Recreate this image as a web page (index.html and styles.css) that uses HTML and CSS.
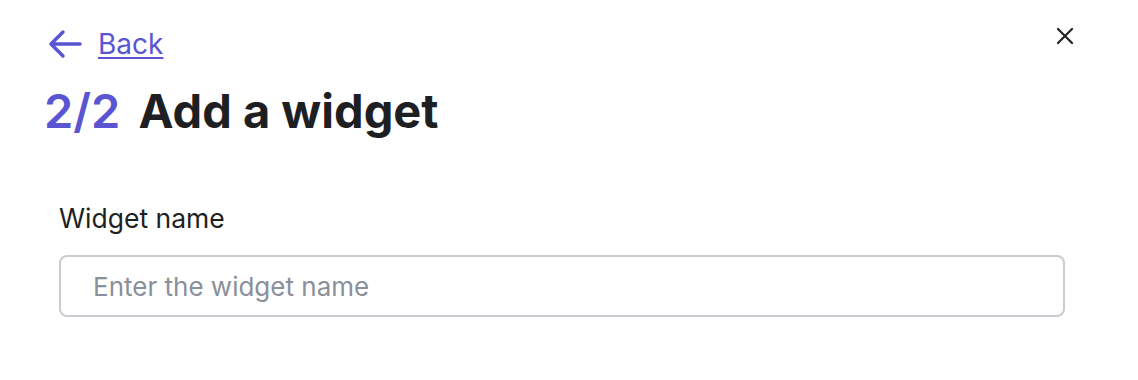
FILE: index.html
```html
<!DOCTYPE html>
<html lang="en">
<head>
  <meta charset="UTF-8">
  <title>Add a widget</title>
  <meta name="viewport" content="width=device-width, initial-scale=1">
  <link rel="stylesheet" href="styles.css">
</head>
<body>
  <div class="panel">
    <div class="top-row">
      <a class="back" href="#">
        <svg width="34" height="30" viewBox="0 0 34 30" fill="none" stroke="currentColor" stroke-width="3.5" stroke-linecap="round" stroke-linejoin="round">
          <path d="M32 15H3M15 3L3 15l12 12"/>
        </svg>
        <span>Back</span>
      </a>
      <button class="close" aria-label="Close">
        <svg width="18" height="18" viewBox="0 0 18 18" fill="none" stroke="currentColor" stroke-width="2.2" stroke-linecap="round">
          <path d="M2 2l14 14M16 2L2 16"/>
        </svg>
      </button>
    </div>
    <h1><span class="step">2/2</span> Add a widget</h1>
    <form class="form">
      <label for="name">Widget name</label>
      <input id="name" type="text" placeholder="Enter the widget name">
    </form>
  </div>
</body>
</html>
```

FILE: styles.css
```css
body {
  margin: 0;
  font-family: 'Inter', 'Noto Sans', sans-serif;
  background: #ffffff;
  color: #1e1f22;
}
.panel {
  padding: 25px 64px 0 44px;
}
.top-row {
  display: flex;
  justify-content: space-between;
  align-items: flex-start;
  height: 36px;
}
.back {
  display: flex;
  align-items: center;
  gap: 16px;
  height: 36px;
  line-height: 36px;
  margin-top: 1px;
  color: #5a55d2;
  font-size: 28px;
  text-decoration: underline;
  text-underline-offset: 3px;
  text-decoration-thickness: 2px;
  margin-left: 4px;
}
.close {
  background: none;
  border: none;
  padding: 0;
  color: #222;
  cursor: pointer;
  margin-top: 2px;
  line-height: 0;
}
h1 {
  margin: 22px 0 0;
  font-size: 47px;
  line-height: 56px;
  font-weight: 700;
}
.step {
  color: #5a55d2;
  font-weight: 600;
  margin-right: 7px;
}
.form {
  display: flex;
  flex-direction: column;
  margin: 63px 9px 0 15px;
}
label {
  font-size: 26.5px;
  line-height: 32px;
  font-weight: 400;
  margin-bottom: 21px;
}
input {
  height: 62px;
  box-sizing: border-box;
  border: 2px solid #c9ccd1;
  border-radius: 8px;
  padding: 0 32px;
  font-family: inherit;
  font-size: 26px;
  color: #1e1f22;
}
input::placeholder {
  color: #8a9099;
}
```
